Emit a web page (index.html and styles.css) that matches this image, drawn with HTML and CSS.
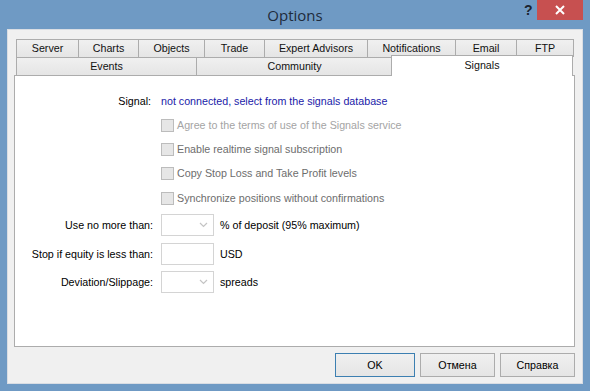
FILE: index.html
```html
<!DOCTYPE html>
<html lang="en">
  <head>
    <meta charset="UTF-8" />
    <title>Options</title>
    <link rel="stylesheet" href="styles.css">
  </head>
  <body>
    <div class="window">
      <header class="title-bar">
        <span class="title">Options</span>
        <span class="help">?</span>
        <span class="close">
          <svg width="10" height="10" viewBox="0 0 10 10">
            <path d="M1 1 L9 9 M9 1 L1 9" stroke="#fff" stroke-width="2" />
          </svg>
        </span>
      </header>
      <main class="client">
        <div class="tabs">
          <div class="tab-row row-top">
            <div class="tab">Server</div>
            <div class="tab">Charts</div>
            <div class="tab">Objects</div>
            <div class="tab">Trade</div>
            <div class="tab">Expert Advisors</div>
            <div class="tab">Notifications</div>
            <div class="tab">Email</div>
            <div class="tab">FTP</div>
          </div>
          <div class="tab-row row-bottom">
            <div class="tab">Events</div>
            <div class="tab">Community</div>
            <div class="tab active">Signals</div>
          </div>
        </div>
        <section class="panel">
          <div class="row signal-row">
            <span class="label">Signal:</span>
            <span class="link">not connected, select from the signals database</span>
          </div>
          <div class="row">
            <span class="label"></span>
            <label class="check faint"><span class="box"></span>Agree to the terms of use of the Signals service</label>
          </div>
          <div class="row">
            <span class="label"></span>
            <label class="check"><span class="box"></span>Enable realtime signal subscription</label>
          </div>
          <div class="row">
            <span class="label"></span>
            <label class="check"><span class="box"></span>Copy Stop Loss and Take Profit levels</label>
          </div>
          <div class="row sync-row">
            <span class="label"></span>
            <label class="check"><span class="box"></span>Synchronize positions without confirmations</label>
          </div>
          <div class="row field first-field">
            <span class="label">Use no more than:</span>
            <span class="input combo">
              <svg width="9" height="6" viewBox="0 0 9 6"><path d="M1 1 L4.5 4.5 L8 1" fill="none" stroke="#c4c4c4" stroke-width="1.2" /></svg>
            </span>
            <span class="unit">% of deposit (95% maximum)</span>
          </div>
          <div class="row field second-field">
            <span class="label">Stop if equity is less than:</span>
            <span class="input"></span>
            <span class="unit">USD</span>
          </div>
          <div class="row field">
            <span class="label">Deviation/Slippage:</span>
            <span class="input combo">
              <svg width="9" height="6" viewBox="0 0 9 6"><path d="M1 1 L4.5 4.5 L8 1" fill="none" stroke="#c4c4c4" stroke-width="1.2" /></svg>
            </span>
            <span class="unit">spreads</span>
          </div>
        </section>
        <footer class="buttons">
          <button class="btn default">OK</button>
          <button class="btn">Отмена</button>
          <button class="btn">Справка</button>
        </footer>
      </main>
    </div>
  </body>
</html>
```

FILE: styles.css
```css
* {
  box-sizing: border-box;
}
body {
  margin: 0;
  width: 590px;
  height: 391px;
  background-color: #6f9ac4;
  font-family: "Liberation Sans", Arial, sans-serif;
  font-size: 10.7px;
  color: #000;
  overflow: hidden;
}

.window {
  display: flex;
  flex-direction: column;
  height: 100%;
}

/* title bar */
.title-bar {
  height: 29px;
  flex-shrink: 0;
  position: relative;
}
.title {
  position: absolute;
  left: 0;
  right: 0;
  top: 5px;
  text-align: center;
  font-family: "Open Sans", sans-serif;
  font-size: 15px;
  color: #1e2b3b;
}
.help {
  position: absolute;
  left: 524px;
  top: 2px;
  font-family: "Liberation Sans", sans-serif;
  font-weight: bold;
  font-size: 14px;
  color: #1b2430;
}
.close {
  position: absolute;
  left: 537px;
  top: 0;
  width: 46px;
  height: 20px;
  background-color: #c75050;
  display: flex;
  align-items: center;
  justify-content: center;
}

/* client area */
.client {
  margin: 0 7px 7px 7px;
  flex: 1;
  background-color: #f0f0f0;
  border: 1px solid #d9dde3;
  padding: 9px 7px 0 6px;
  display: flex;
  flex-direction: column;
}

.tabs {
  padding-left: 2px;
}
.tab-row {
  display: flex;
  height: 18px;
}
.tab {
  border: 1px solid #acacac;
  border-bottom: none;
  margin-right: -1px;
  background: linear-gradient(#f0f0f0, #e5e5e5);
  display: flex;
  align-items: center;
  justify-content: center;
  padding-bottom: 1px;
  color: #111;
}
.row-top .tab:nth-child(1) { width: 63px; }
.row-top .tab:nth-child(2) { width: 61px; }
.row-top .tab:nth-child(3) { width: 67px; }
.row-top .tab:nth-child(4) { width: 61px; }
.row-top .tab:nth-child(5) { width: 104px; }
.row-top .tab:nth-child(6) { width: 89px; }
.row-top .tab:nth-child(7) { width: 62px; }
.row-top .tab:nth-child(8) { width: 58px; }
.row-bottom .tab:nth-child(1) { width: 181px; }
.row-bottom .tab:nth-child(2) { width: 197px; }
.tab.active {
  width: 182px;
  height: 21px;
  margin-top: -2px;
  margin-left: -1px;
  background: #fff;
  position: relative;
  z-index: 1;
  align-items: flex-start;
  padding-top: 3px;
}

.panel {
  width: 561px;
  height: 272px;
  flex-shrink: 0;
  background-color: #fff;
  border: 1px solid #acacac;
  padding-top: 12px;
}

.row {
  display: flex;
  align-items: center;
  height: 24px;
}
.signal-row {
  height: 25px;
}
.sync-row {
  margin-top: 1px;
}
.label {
  width: 138px;
  padding-right: 2px;
  text-align: right;
  flex-shrink: 0;
  margin-right: 8px;
}
.link {
  color: #1a1aa8;
}
.check {
  display: flex;
  align-items: center;
  color: #6d6d6d;
}
.check.faint {
  color: #a4a4a4;
}
.box {
  width: 13px;
  height: 13px;
  border: 1px solid #bcbcbc;
  background-color: #e6e6e6;
  margin-right: 3px;
}

.field {
  height: 22px;
  margin-top: 6px;
}
.first-field {
  margin-top: 4px;
}
.second-field {
  margin-top: 7px;
}
.field .label {
  padding-right: 0;
}
.input {
  width: 53px;
  height: 22px;
  border: 1px solid #d4d4d4;
  background-color: #fff;
  display: flex;
  align-items: center;
  justify-content: flex-end;
  padding-right: 5px;
}
.unit {
  margin-left: 6px;
}

/* dialog buttons */
.buttons {
  display: flex;
  justify-content: flex-end;
  gap: 5px;
  padding-top: 6px;
}
.btn {
  font-family: inherit;
  font-size: 10.7px;
  height: 24px;
  background: linear-gradient(#f0f0f0, #e5e5e5);
  border: 1px solid #acacac;
  border-radius: 0;
  padding: 0;
  width: 75px;
  color: #000;
}
.btn.default {
  width: 80px;
  border-color: #3c7fb1;
}
```
